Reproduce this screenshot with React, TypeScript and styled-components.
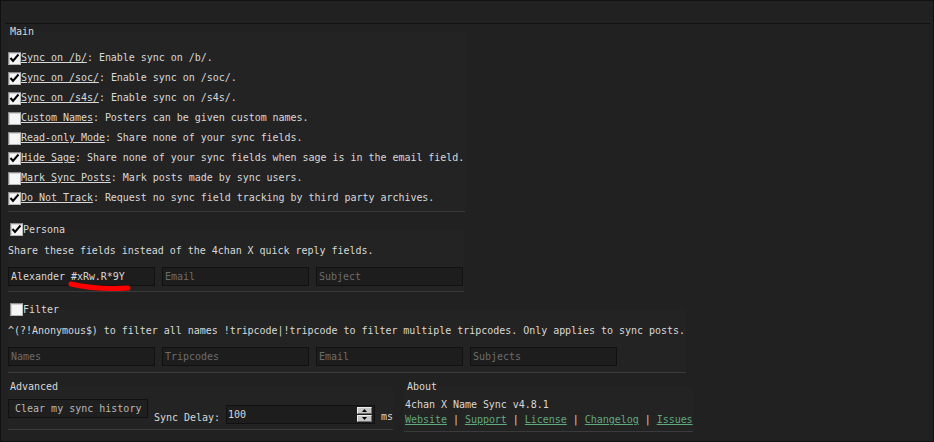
import React from "react";
import styled, { createGlobalStyle } from "styled-components";

const GlobalStyle = createGlobalStyle`
  html, body {
    margin: 0;
    padding: 0;
    background: #202020;
  }
  body {
    font-family: "DejaVu Sans Mono", "Liberation Mono", monospace;
    font-size: 10px;
    line-height: 12px;
    letter-spacing: -0.03px;
    color: #d8d8d8;
  }
`;

const Page = styled.div`
  position: relative;
  box-sizing: border-box;
  width: 934px;
  height: 442px;
  border: 1px solid #111;
  background: #212121;
  overflow: hidden;
`;

const TopBar = styled.div`
  height: 22px;
  margin: 0 3px 0 4px;
  border-bottom: 1px solid #121212;
`;

const Content = styled.div`
  padding-left: 7px;
`;

const Fieldset = styled.fieldset<{ $w: number; $mt: number; $pt: number; $pb: number; $ml?: number; $pl?: number }>`
  box-sizing: border-box;
  width: ${(p) => p.$w}px;
  min-inline-size: 0;
  margin: ${(p) => p.$mt}px 0 0 ${(p) => p.$ml ?? 0}px;
  padding: ${(p) => p.$pt}px 0 ${(p) => p.$pb}px ${(p) => p.$pl ?? 0}px;
  border: 0;
  border-bottom: 1px solid #3a3a3a;
  background: #232323;
`;

const Legend = styled.legend<{ $h?: number }>`
  display: flex;
  align-items: center;
  height: ${(p) => p.$h ?? 12}px;
  padding: 0 2px;
  line-height: 12px;
  white-space: nowrap;
`;

const LegendLabel = styled.span`
  padding-top: 2px;
`;

const Row = styled.div`
  display: flex;
  align-items: center;
  height: 20px;
  white-space: nowrap;
`;

const Name = styled.span`
  text-decoration: underline;
`;

const Box = styled.span`
  display: inline-flex;
  align-items: center;
  justify-content: center;
  flex: none;
  box-sizing: border-box;
  width: 13px;
  height: 13px;
  background: #f6f6f6;
  border: 1px solid;
  border-color: #8c8c8c #b8b8b8 #b8b8b8 #8c8c8c;
  box-shadow: inset 1px 1px 0 #d4d4d4;
`;

const Text = styled.div<{ $mt?: number }>`
  margin-top: ${(p) => p.$mt ?? 0}px;
  height: 12px;
  white-space: nowrap;
`;

const Fields = styled.div<{ $mt: number }>`
  display: flex;
  gap: 7px;
  margin-top: ${(p) => p.$mt}px;
`;

const Field = styled.input`
  box-sizing: border-box;
  width: 147px;
  height: 19px;
  margin: 0;
  padding: 0 2px;
  background: #1d1d1d;
  border: 1px solid #111;
  color: #d8d8d8;
  font: inherit;
  letter-spacing: inherit;
  outline: none;
  &::placeholder {
    color: #6c6c6c;
  }
`;

const BottomRow = styled.div`
  display: flex;
  align-items: flex-start;
`;

const AdvancedRow = styled.div`
  display: flex;
  align-items: flex-start;
  height: 25px;
`;

const Button = styled.button`
  box-sizing: border-box;
  height: 19px;
  width: 140px;
  margin: 0;
  padding: 1px 6px 0;
  background: #1f1f1f;
  border: 1px solid #111;
  color: #b8b8b8;
  font: inherit;
  line-height: 12px;
  text-align: left;
  white-space: nowrap;
`;

const Inline = styled.span<{ $ml: number; $mt: number }>`
  margin: ${(p) => p.$mt}px 0 0 ${(p) => p.$ml}px;
  white-space: nowrap;
`;

const NumberBox = styled.div`
  box-sizing: border-box;
  display: flex;
  align-items: flex-start;
  width: 149px;
  height: 19px;
  margin: 6px 0 0 6px;
  background: #1d1d1d;
  border: 1px solid #111;
`;

const NumberValue = styled.input`
  flex: 1;
  min-width: 0;
  height: 17px;
  margin: 0;
  padding: 0 0 0 1px;
  border: 0;
  background: transparent;
  color: #d8d8d8;
  font: inherit;
  outline: none;
`;

const Spinner = styled.div`
  display: flex;
  flex-direction: column;
  gap: 1px;
  margin: 1px 2px 0 0;
`;

const SpinButton = styled.span`
  display: flex;
  align-items: center;
  justify-content: center;
  box-sizing: border-box;
  width: 15px;
  height: 7px;
  background: #c6c6c6;
  border: 1px solid;
  border-color: #eeeeee #6e6e6e #6e6e6e #eeeeee;
`;

const Links = styled.div`
  margin-top: 3px;
  height: 12px;
  white-space: nowrap;
`;

const Link = styled.a`
  color: #5fa97f;
  text-decoration: underline;
`;

const Mark = styled.svg`
  position: absolute;
  left: 66px;
  top: 278px;
`;

function Check({ checked }: { checked: boolean }) {
  return (
    <Box>
      {checked && (
        <svg width="11" height="11" viewBox="0 0 11 11">
          <polyline points="1.5,5 4,8 9.5,1.5" fill="none" stroke="#000" strokeWidth="2" />
        </svg>
      )}
    </Box>
  );
}

const options: [string, string, boolean][] = [
  ["Sync on /b/", "Enable sync on /b/.", true],
  ["Sync on /soc/", "Enable sync on /soc/.", true],
  ["Sync on /s4s/", "Enable sync on /s4s/.", true],
  ["Custom Names", "Posters can be given custom names.", false],
  ["Read-only Mode", "Share none of your sync fields.", false],
  ["Hide Sage", "Share none of your sync fields when sage is in the email field.", true],
  ["Mark Sync Posts", "Mark posts made by sync users.", false],
  ["Do Not Track", "Request no sync field tracking by third party archives.", true],
];

const links = ["Website", "Support", "License", "Changelog", "Issues"];

export default function App() {
  return (
    <Page>
      <GlobalStyle />
      <TopBar />
      <Content>
        <Fieldset $w={457} $mt={2} $pt={10} $pb={3}>
          <Legend>Main</Legend>
          {options.map(([name, desc, on]) => (
            <Row key={name}>
              <Check checked={on} />
              <Name>{name}</Name>: {desc}
            </Row>
          ))}
        </Fieldset>

        <Fieldset $w={456} $mt={10} $pt={9} $pb={5}>
          <Legend $h={14}>
            <Check checked />
            <LegendLabel>Persona</LegendLabel>
          </Legend>
          <Text>Share these fields instead of the 4chan X quick reply fields.</Text>
          <Fields $mt={10}>
            <Field defaultValue="Alexander #xRw.R*9Y" />
            <Field placeholder="Email" />
            <Field placeholder="Subject" />
          </Fields>
        </Fieldset>

        <Fieldset $w={678} $mt={10} $pt={9} $pb={6}>
          <Legend $h={14}>
            <Check checked={false} />
            <LegendLabel>Filter</LegendLabel>
          </Legend>
          <Text>
            ^(?!Anonymous$) to filter all names !tripcode|!tripcode to filter multiple tripcodes. Only applies to sync posts.
          </Text>
          <Fields $mt={10}>
            <Field placeholder="Names" />
            <Field placeholder="Tripcodes" />
            <Field placeholder="Email" />
            <Field placeholder="Subjects" />
          </Fields>
        </Fieldset>

        <BottomRow>
          <Fieldset $w={385} $mt={8} $pt={6} $pb={5}>
            <Legend>Advanced</Legend>
            <AdvancedRow>
              <Button>Clear my sync history</Button>
              <Inline $ml={6} $mt={13}>Sync Delay:</Inline>
              <NumberBox>
                <NumberValue defaultValue="100" />
                <Spinner>
                  <SpinButton>
                    <svg width="5" height="3" viewBox="0 0 5 3">
                      <polygon points="2.5,0 5,3 0,3" fill="#000" />
                    </svg>
                  </SpinButton>
                  <SpinButton>
                    <svg width="5" height="3" viewBox="0 0 5 3">
                      <polygon points="0,0 5,0 2.5,3" fill="#000" />
                    </svg>
                  </SpinButton>
                </Spinner>
              </NumberBox>
              <Inline $ml={6} $mt={12}>ms</Inline>
            </AdvancedRow>
          </Fieldset>

          <Fieldset $w={289} $ml={11} $mt={8} $pt={6} $pb={5} $pl={1}>
            <Legend>About</Legend>
            <Text>4chan X Name Sync v4.8.1</Text>
            <Links>
              {links.map((l, i) => (
                <React.Fragment key={l}>
                  {i > 0 && " | "}
                  <Link href="#">{l}</Link>
                </React.Fragment>
              ))}
            </Links>
          </Fieldset>
        </BottomRow>
      </Content>
      <Mark width="66" height="16" viewBox="0 0 66 16">
        <path d="M4 5 Q 30 11 61 9" fill="none" stroke="#ff0000" strokeWidth="5" strokeLinecap="round" />
      </Mark>
    </Page>
  );
}
